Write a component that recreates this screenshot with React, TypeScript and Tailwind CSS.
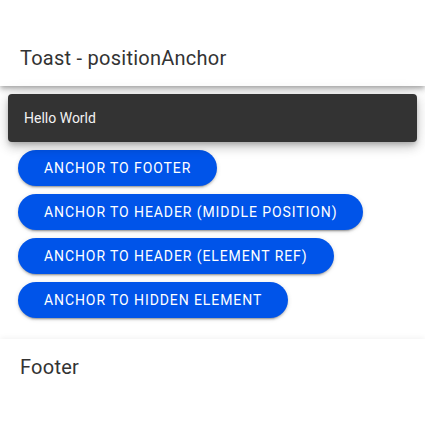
const buttons = [
  'Anchor to Footer',
  'Anchor to Header (Middle Position)',
  'Anchor to Header (Element Ref)',
  'Anchor to Hidden Element',
];

export default function App() {
  return (
    <div className="relative flex h-[425px] flex-col bg-white font-['Roboto',sans-serif]">
      {/* Header */}
      <header className="relative z-10 pt-[30px] shadow-[0_2px_4px_-1px_rgba(0,0,0,0.2),0_4px_5px_0_rgba(0,0,0,0.14),0_1px_10px_0_rgba(0,0,0,0.12)]">
        <div className="flex h-[56px] items-center px-5">
          <h1 className="text-[20px] font-normal tracking-[0.0125em] text-[#333333]">
            Toast - positionAnchor
          </h1>
        </div>
      </header>

      {/* Content */}
      <main className="flex-1 px-4 pt-[64px]">
        <div className="flex flex-col items-start gap-2">
          {buttons.map((label) => (
            <button
              key={label}
              type="button"
              className="mx-[2px] h-9 rounded-full bg-[#0054e9] px-[26px] text-[14px] font-normal uppercase tracking-[0.065em] text-white shadow-[0_3px_1px_-2px_rgba(0,0,0,0.2),0_2px_2px_0_rgba(0,0,0,0.14),0_1px_5px_0_rgba(0,0,0,0.12)]"
            >
              {label}
            </button>
          ))}
        </div>
      </main>

      {/* Footer */}
      <footer className="pb-[30px] shadow-[0_-1px_6px_0_rgba(0,0,0,0.06)]">
        <div className="flex h-[56px] items-center px-5">
          <h2 className="text-[20px] font-normal tracking-[0.0125em] text-[#333333]">
            Footer
          </h2>
        </div>
      </footer>

      {/* Toast overlay anchored below the header */}
      <div className="absolute left-2 right-2 top-[94px] z-20 flex h-12 items-center rounded bg-[#333333] px-4 shadow-[0_3px_5px_-1px_rgba(0,0,0,0.2),0_6px_10px_0_rgba(0,0,0,0.14),0_1px_18px_0_rgba(0,0,0,0.12)]">
        <span className="text-[14px] text-[#f2f2f2]">Hello World</span>
      </div>
    </div>
  );
}
